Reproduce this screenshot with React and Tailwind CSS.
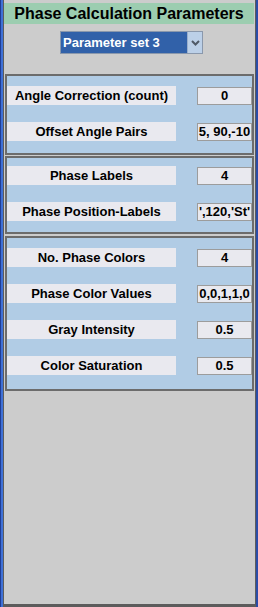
import React from "react";

const font = { fontFamily: '"Liberation Sans", Arial, sans-serif' };

function Row({ label, value }) {
  return (
    <div className="flex items-center h-[19px]">
      <div className="w-[169px] h-[19px] bg-[#e9e9ef] flex items-center justify-center text-[13px] font-bold text-black leading-none whitespace-nowrap">
        {label}
      </div>
      <div className="ml-[21px] w-[55px] h-[18px] bg-[#e9e9ef] border border-[#9c9c9c] flex items-center justify-center text-[13px] font-bold text-black leading-none whitespace-nowrap overflow-hidden">
        {value}
      </div>
    </div>
  );
}

function Group({ children, pt, pb }) {
  return (
    <div className={`mx-[1px] border-2 border-[#6c6c6c] bg-[#b1cce5] flex flex-col gap-[17px] ${pt} ${pb}`}>
      {children}
    </div>
  );
}

export default function App() {
  return (
    <div className="w-[258px] h-[607px] flex bg-[#cccccc]" style={font}>
      <div className="w-[1px] h-full bg-[#1f3d95]" />
      <div className="w-[2px] h-full bg-[#3e70d6]" />
      <div className="w-[253px] h-full border-x border-b-[3px] border-[#5c5c5c] bg-[#cccccc] flex flex-col pt-[3px]">
        <div className="mr-[1px] h-[21px] bg-[#9ccdb0] flex items-center justify-center text-[16px] font-bold text-black leading-none whitespace-nowrap">
          Phase Calculation Parameters
        </div>
        <div className="mt-[7px] ml-[56px] w-[143px] h-[23px] flex border border-[#8a98ac]">
          <div className="flex-1 bg-[#3161a9] text-white text-[13px] font-bold leading-none flex items-center pl-[2px] whitespace-nowrap">
            Parameter set 3
          </div>
          <div className="w-[15px] bg-[#bcd0e8] border-l border-[#9aafcc] flex items-center justify-center">
            <svg width="9" height="6" viewBox="0 0 9 6">
              <path d="M1 1 L4.5 4.5 L8 1" fill="none" stroke="#505a68" strokeWidth="2" />
            </svg>
          </div>
        </div>
        <div className="mt-[20px]">
          <Group pt="pt-[10px]" pb="pb-[12px]">
            <Row label="Angle Correction (count)" value="0" />
            <Row label="Offset Angle Pairs" value="5, 90,-10" />
          </Group>
        </div>
        <div className="mt-[1px]">
          <Group pt="pt-[8px]" pb="pb-[11px]">
            <Row label="Phase Labels" value="4" />
            <Row label="Phase Position-Labels" value="',120,'St'" />
          </Group>
        </div>
        <div className="mt-[2px]">
          <Group pt="pt-[10px]" pb="pb-[14px]">
            <Row label="No. Phase Colors" value="4" />
            <Row label="Phase Color Values" value="0,0,1,1,0" />
            <Row label="Gray Intensity" value="0.5" />
            <Row label="Color Saturation" value="0.5" />
          </Group>
        </div>
      </div>
      <div className="w-[2px] h-full bg-[#2b4ca6]" />
    </div>
  );
}
